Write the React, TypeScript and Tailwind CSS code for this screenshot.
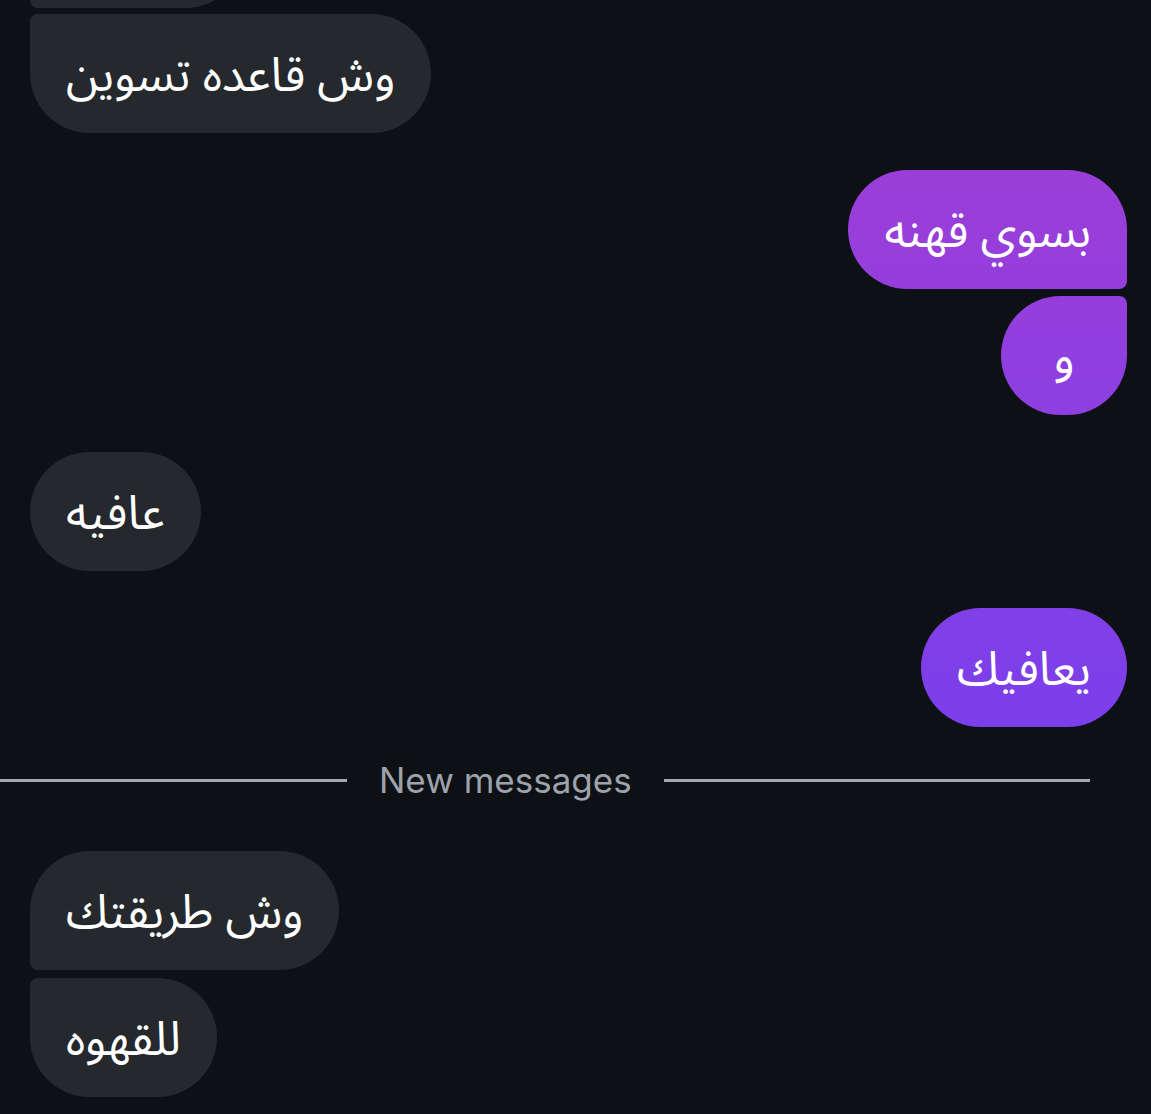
import React from "react";

type Msg = {
  text: string;
  mine: boolean;
  corner: string;
};

const arabic = "font-['Noto_Sans_Arabic','DejaVu_Sans',sans-serif]";

const Bubble: React.FC<Msg> = ({ text, mine, corner }) => (
  <div className={`flex ${mine ? "justify-end" : "justify-start"}`}>
    <div
      dir="rtl"
      className={`flex h-[119px] min-w-[126px] items-center justify-center px-9 pt-[5px] text-[47px] leading-none text-white ${arabic} ${corner} ${
        mine
          ? "bg-fixed bg-linear-to-b from-[#a53bd3] to-[#633bf7]"
          : "bg-[#25282d]"
      }`}
    >
      {text}
    </div>
  </div>
);

export default function App() {
  return (
    <div className="min-h-[1114px] w-full overflow-hidden bg-[#0d1015] pl-[30px] pr-[24px]">
      <div className="-mt-[111px] flex flex-col gap-[6px]">
        <div className="flex justify-start">
          <div className="h-[119px] w-[215px] rounded-t-[60px] rounded-br-[60px] rounded-bl-[8px] bg-[#25282d]" />
        </div>
        <Bubble text="وش قاعده تسوين" mine={false} corner="rounded-[60px] rounded-tl-[8px]" />
      </div>

      <div className="mt-[37px] flex flex-col gap-[7px]">
        <Bubble text="بسوي قهنه" mine corner="rounded-[60px] rounded-br-[8px]" />
        <Bubble text="و" mine corner="rounded-[60px] rounded-tr-[8px]" />
      </div>

      <div className="mt-[37px]">
        <Bubble text="عافيه" mine={false} corner="rounded-[60px]" />
      </div>

      <div className="mt-[37px]">
        <Bubble text="يعافيك" mine corner="rounded-[60px]" />
      </div>

      <div className="-ml-[30px] mt-[34px] flex h-[38px] w-[1090px] items-center">
        <div className="h-[3px] w-[347px] bg-[#a3a7ae]" />
        <span className="px-8 font-['Inter',sans-serif] text-[35px] leading-none text-[#9ea3ab]">
          New messages
        </span>
        <div className="h-[3px] flex-1 bg-[#a3a7ae]" />
      </div>

      <div className="mt-[52px] flex flex-col gap-[8px]">
        <Bubble text="وش طريقتك" mine={false} corner="rounded-[60px] rounded-bl-[8px]" />
        <Bubble text="للقهوه" mine={false} corner="rounded-[60px] rounded-tl-[8px]" />
      </div>
    </div>
  );
}
